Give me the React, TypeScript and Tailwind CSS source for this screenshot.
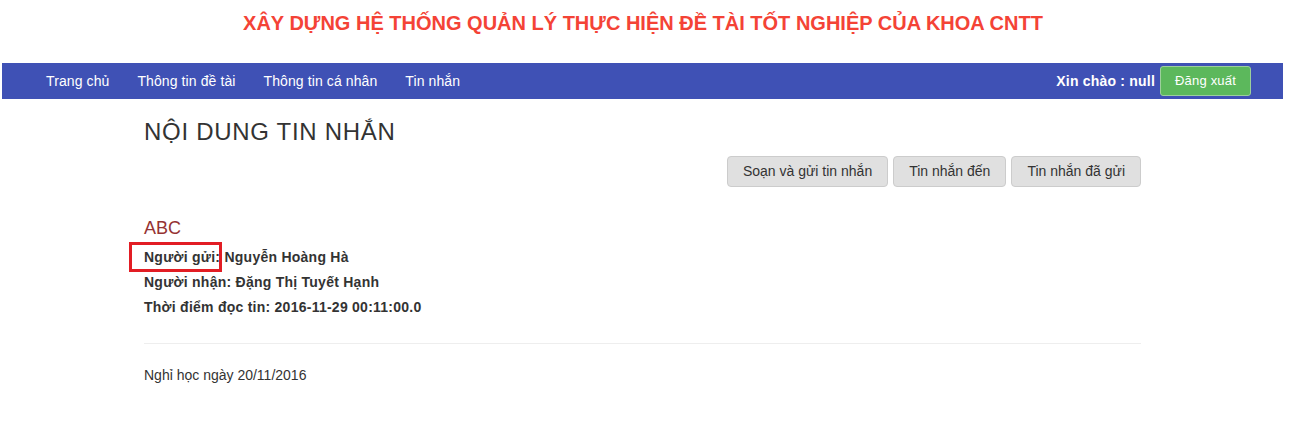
import React from "react";

export default function App() {
  const font = { fontFamily: '"Liberation Sans", Arial, sans-serif' };
  return (
    <div className="w-[1306px] h-[440px] bg-white text-[#333]" style={font}>
      <div className="w-[1286px] h-[63px] pt-[9px] text-center">
        <div className="text-[20px] leading-[28px] font-bold text-[#f44336]">
          XÂY DỰNG HỆ THỐNG QUẢN LÝ THỰC HIỆN ĐỀ TÀI TỐT NGHIỆP CỦA KHOA CNTT
        </div>
      </div>
      <div className="ml-[2px] w-[1281px] h-[36px] bg-[#3f51b5] flex items-center justify-between pl-[30px] pr-[32px]">
        <div className="flex items-center text-white text-[14px] tracking-[0.1px]">
          <span className="px-[14px]">Trang chủ</span>
          <span className="px-[14px]">Thông tin đề tài</span>
          <span className="px-[14px]">Thông tin cá nhân</span>
          <span className="px-[14px]">Tin nhắn</span>
        </div>
        <div className="flex items-center gap-[5px]">
          <span className="text-white font-bold text-[14px] tracking-[0.2px]">Xin chào : null</span>
          <button className="h-[30px] w-[91px] bg-[#5cb85c] border border-[#9ccf9c] rounded-[3px] text-white text-[13px] tracking-[0.2px]">
            Đăng xuất
          </button>
        </div>
      </div>
      <div className="ml-[144px] w-[997px]">
        <h1 className="mt-[19px] text-[24px] leading-[28px] text-[#333] tracking-[0.7px]">NỘI DUNG TIN NHẮN</h1>
        <div className="mt-[10px] flex justify-end gap-[5px] text-[14px]">
          <button className="h-[31px] px-[15px] bg-[#e0e0e0] border border-[#ccc] rounded-[4px] text-[#333]">Soạn và gửi tin nhắn</button>
          <button className="h-[31px] px-[15px] bg-[#e0e0e0] border border-[#ccc] rounded-[4px] text-[#333]">Tin nhắn đến</button>
          <button className="h-[31px] px-[15px] bg-[#e0e0e0] border border-[#ccc] rounded-[4px] text-[#333]">Tin nhắn đã gửi</button>
        </div>
        <div className="mt-[30px] text-[18px] leading-[22px] text-[#953333]">ABC</div>
        <div className="mt-[6px] text-[14px] leading-[25px] font-bold text-[#333] tracking-[0.25px]">
          <div className="relative">
            <span className="absolute left-[-15px] top-[-3px] w-[93px] h-[30px] border-[3px] border-[#e21d24]"></span>
            Người gửi: Nguyễn Hoàng Hà
          </div>
          <div>Người nhận: Đặng Thị Tuyết Hạnh</div>
          <div>Thời điểm đọc tin: 2016-11-29 00:11:00.0</div>
        </div>
        <div className="mt-[23px] border-t border-[#eee]"></div>
        <div className="mt-[21px] text-[14px] leading-[20px] text-[#333]">Nghỉ học ngày 20/11/2016</div>
      </div>
    </div>
  );
}
